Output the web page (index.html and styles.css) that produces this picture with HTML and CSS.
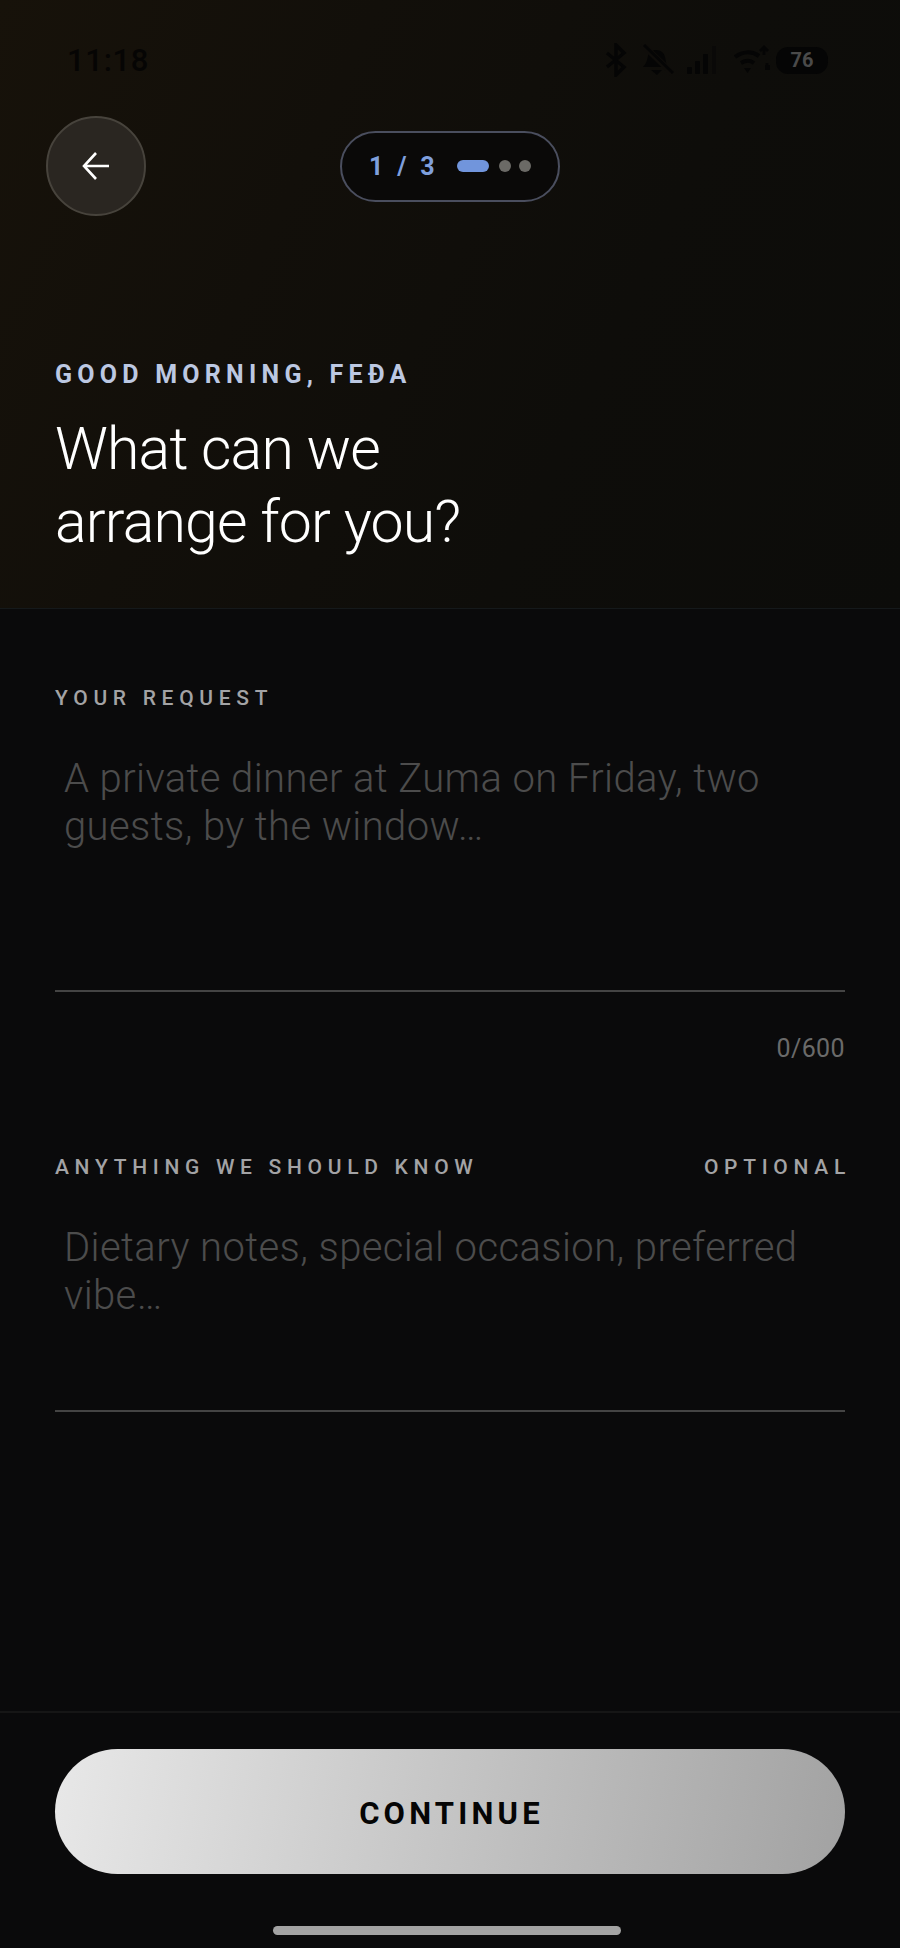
FILE: index.html
```html
<!DOCTYPE html>
<html lang="en">
<head>
    <meta charset="UTF-8">
    <meta name="viewport" content="width=device-width, initial-scale=1.0">
    <title>New request</title>
    <link rel="stylesheet" href="styles.css">
</head>
<body>
<div class="screen">
    <header class="hero">
        <div class="status-bar">
            <span class="status-time">11:18</span>
            <div class="status-icons">
                <svg viewBox="0 0 22 34" width="22" height="34"><path d="M2 10l17 14-8 8V2l8 8L2 24" fill="none" stroke="#050505" stroke-width="3.4"/></svg>
                <svg viewBox="0 0 36 32" width="36" height="32"><path d="M4 23c3-3 4-6 5-11 1-4 4-6 8-6 5 0 8 3 9 7l2 10z" fill="#050505"/><path d="M12 26h11l-5 5z" fill="#050505"/><path d="M3 0l30 29" stroke="#0f0d0a" stroke-width="6"/><path d="M5 1l29 28" stroke="#050505" stroke-width="3"/></svg>
                <svg viewBox="0 0 30 30" width="30" height="30"><g fill="#050505"><rect x="0" y="22" width="5" height="7" rx="1"/><rect x="8" y="16" width="5" height="13" rx="1"/><rect x="16" y="9" width="5" height="20" rx="1"/></g><rect x="25" y="1" width="4" height="28" rx="1" fill="#0a0908"/></svg>
                <svg class="icon-wifi" viewBox="0 0 38 30" width="38" height="30"><path d="M1 12c8-6 17-6 24-1M7 18c5-3 9-3 13 0" fill="none" stroke="#050505" stroke-width="4"/><path d="M10 23h7l-3.500 5z" fill="#050505"/><path d="M30 10V2M26 6l4-4 4 4M33 18v7" fill="none" stroke="#050505" stroke-width="2.800"/><rect x="31" y="20" width="5" height="5" fill="#050505"/></svg>
                <span class="status-battery">76</span>
            </div>
        </div>
        <nav class="top-nav">
            <button class="back-btn" aria-label="Back">
                <svg viewBox="0 0 30 30" width="30" height="30"><path d="M28 15H3M15 2L3 15l12 13" fill="none" stroke="#fff" stroke-width="2.6"/></svg>
            </button>
            <div class="step-pill">
                <span class="step-text">1 / 3</span>
                <span class="step-bar"></span>
                <span class="step-dot"></span>
                <span class="step-dot"></span>
            </div>
        </nav>
        <p class="eyebrow">GOOD MORNING, FEĐA</p>
        <h1>What can we<br>arrange for you?</h1>
    </header>

    <main class="form">
        <div class="field field-request">
            <div class="field-label"><span>YOUR REQUEST</span></div>
            <div class="field-input">A private dinner at Zuma on Friday, two guests, by the window…</div>
            <div class="counter">0/600</div>
        </div>
        <div class="field field-notes">
            <div class="field-label"><span>ANYTHING WE SHOULD KNOW</span><span class="optional">OPTIONAL</span></div>
            <div class="field-input">Dietary notes, special occasion, preferred vibe…</div>
        </div>
    </main>

    <footer class="footer">
        <button class="continue-btn">CONTINUE</button>
        <div class="home-bar"></div>
    </footer>
</div>
</body>
</html>
```

FILE: styles.css
```css
* {
    box-sizing: border-box;
}
body, html {
    margin: 0;
    padding: 0;
    height: 100%;
    background: #0a0a0b;
    font-family: 'Roboto', sans-serif;
}
.screen {
    width: 900px;
    height: 1948px;
    display: flex;
    flex-direction: column;
    overflow: hidden;
}
.hero {
    height: 609px;
    padding: 0 55px;
    border-bottom: 1px solid #15191b;
    background: linear-gradient(115deg, #17120a 0%, #120f0a 32%, #0e0d0a 65%, #0c0c0a 100%);
}
.status-bar {
    height: 116px;
    margin: 0 -55px;
    padding: 43px 72px 0 67px;
    display: flex;
    justify-content: space-between;
    align-items: flex-start;
}
.status-time {
    margin-top: 1px;
    font-size: 31px;
    line-height: 34px;
    font-weight: 500;
    color: #060504;
    letter-spacing: 0.7px;
}
.status-icons {
    display: flex;
    align-items: center;
    gap: 12px;
}
.status-battery {
    width: 52px;
    height: 27px;
    border-radius: 12px;
    background: #050505;
    color: #4a4a4a;
    font-size: 20px;
    font-weight: 700;
    line-height: 27px;
    text-align: center;
}
.icon-wifi {
    margin-left: 5px;
    margin-right: -8px;
}
.top-nav {
    margin-left: -9px;
    margin-right: -9px;
    display: grid;
    grid-template-columns: 1fr auto 1fr;
    align-items: center;
}
.back-btn {
    width: 100px;
    height: 100px;
    padding: 0;
    display: flex;
    align-items: center;
    justify-content: center;
    border-radius: 50%;
    border: 2px solid #47433c;
    background: #2a2621;
}
.step-pill {
    width: 220px;
    height: 71px;
    padding-left: 27px;
    display: flex;
    align-items: center;
    border-radius: 36px;
    border: 2px solid #4a4e5e;
    background: #0a0908;
}
.step-text {
    color: #7f9fdc;
    font-size: 25px;
    font-weight: 700;
    letter-spacing: 3.8px;
    margin-right: 19px;
    white-space: nowrap;
}
.step-bar {
    width: 32px;
    height: 12px;
    border-radius: 6px;
    background: #7195dc;
    margin-right: 10px;
}
.step-dot {
    width: 12px;
    height: 12px;
    border-radius: 50%;
    background: #6b6a66;
    margin-right: 8px;
}
.eyebrow {
    margin: 145px 0 0;
    color: #bcc8e2;
    font-size: 25px;
    line-height: 28px;
    font-weight: 700;
    letter-spacing: 5.25px;
}
h1 {
    margin: 23px 0 0;
    color: #fff;
    font-size: 59px;
    line-height: 73px;
    font-weight: 300;
    letter-spacing: -0.85px;
}
.form {
    flex: 1;
    padding: 0 55px;
}
.field-label {
    display: flex;
    justify-content: space-between;
    color: #a3a3a5;
    font-size: 21px;
    line-height: 24px;
    font-weight: 500;
    letter-spacing: 5.7px;
}
.optional {
    margin-right: -6px;
}
.field-request {
    padding-top: 77px;
}
.field-notes {
    padding-top: 91px;
}
.field-input {
    padding: 0 9px;
    color: #4c4c4c;
    font-size: 40px;
    line-height: 48px;
    font-weight: 300;
    letter-spacing: 0.4px;
    border-bottom: 2px solid #444;
}
.field-request .field-input {
    margin-top: 45px;
    height: 237px;
}
.field-notes .field-input {
    margin-top: 45px;
    height: 188px;
}
.counter {
    margin-top: 42px;
    text-align: right;
    color: #6a6a6a;
    font-size: 25px;
    line-height: 30px;
    letter-spacing: 0.4px;
}
.footer {
    height: 237px;
    padding: 36px 55px 0;
    border-top: 2px solid #161616;
}
.continue-btn {
    display: block;
    width: 790px;
    height: 125px;
    padding: 3px 0 0 3px;
    border: none;
    border-radius: 63px;
    background: linear-gradient(100deg, #e8e8e8 0%, #c8c8c8 45%, #a2a2a2 100%);
    color: #050505;
    font-family: 'Roboto', sans-serif;
    font-size: 31px;
    font-weight: 700;
    letter-spacing: 4.2px;
}
.home-bar {
    width: 348px;
    height: 9px;
    margin: 52px 0 0 218px;
    border-radius: 5px;
    background: #a3a3a3;
}
```
